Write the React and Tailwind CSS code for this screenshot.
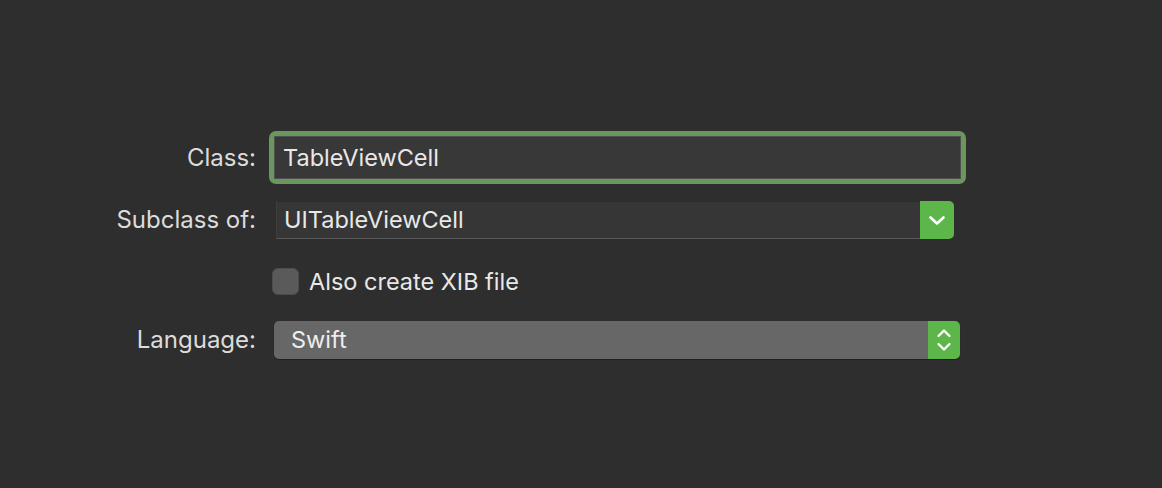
const FONT = { fontFamily: 'Inter, "Liberation Sans", sans-serif' }

function Label({ children }) {
  return <div className="w-[256px] shrink-0 text-right text-[24px] text-[#dcdcdc]">{children}</div>
}

function ChevronDown() {
  return (
    <svg width="18" height="11" viewBox="0 0 18 11" fill="none">
      <path d="M2.5 2.5l6.5 6 6.5-6" stroke="white" strokeWidth="2.6" strokeLinecap="round" strokeLinejoin="round" />
    </svg>
  )
}

function UpDown() {
  return (
    <svg width="16" height="26" viewBox="0 0 16 26" fill="none">
      <path d="M2.5 9l5.5-5.5 5.5 5.5" stroke="white" strokeWidth="2.3" strokeLinecap="round" strokeLinejoin="round" />
      <path d="M2.5 17l5.5 5.5 5.5-5.5" stroke="white" strokeWidth="2.3" strokeLinecap="round" strokeLinejoin="round" />
    </svg>
  )
}

export default function App() {
  return (
    <div className="w-[1162px] h-[488px] bg-[#2e2e2e] pt-[131px] antialiased" style={FONT}>
      {/* Class */}
      <div className="flex items-center h-[53px]">
        <Label>Class:</Label>
        <div className="ml-[13px] w-[697px] h-[53px] rounded-[7px] border-[5px] border-[#6a975b]">
          <div className="h-full border border-[#505050] bg-[#383838] pl-[8px] flex items-center text-[23.5px] text-[#e8e8e8]">
            TableViewCell
          </div>
        </div>
      </div>

      {/* Subclass */}
      <div className="flex items-center h-[38px] mt-[17px]">
        <Label>Subclass of:</Label>
        <div className="ml-[20px] w-[678px] h-[38px] flex">
          <div className="flex-1 flex items-center pl-[7px] bg-[#363636] border-t border-[#2b2b2b] border-b border-b-[#5a5a5a] border-l border-l-[#3e3e3e] text-[23.5px] text-[#e8e8e8]">
            UITableViewCell
          </div>
          <div className="w-[34px] flex items-center justify-center rounded-r-[5px] bg-[#5db64a]">
            <ChevronDown />
          </div>
        </div>
      </div>

      {/* Checkbox */}
      <div className="flex items-center h-[27px] mt-[29px]">
        <div className="w-[256px] shrink-0" />
        <div className="ml-[16px] w-[27px] h-[27px] rounded-[6px] bg-[#5a5a5a] border border-[#4d4d4d]" />
        <span className="ml-[10px] text-[23.5px] text-[#e8e8e8]">Also create XIB file</span>
      </div>

      {/* Language */}
      <div className="flex items-center h-[38px] mt-[26px]">
        <Label>Language:</Label>
        <div className="ml-[18px] w-[686px] h-[38px] flex rounded-[5px] overflow-hidden shadow-[0_1px_1px_rgba(0,0,0,0.35)]">
          <div className="flex-1 flex items-center pl-[17px] bg-[#676767] text-[23.5px] text-[#ededed]">Swift</div>
          <div className="w-[32px] flex items-center justify-center bg-[#5db64a]">
            <UpDown />
          </div>
        </div>
      </div>
    </div>
  )
}
